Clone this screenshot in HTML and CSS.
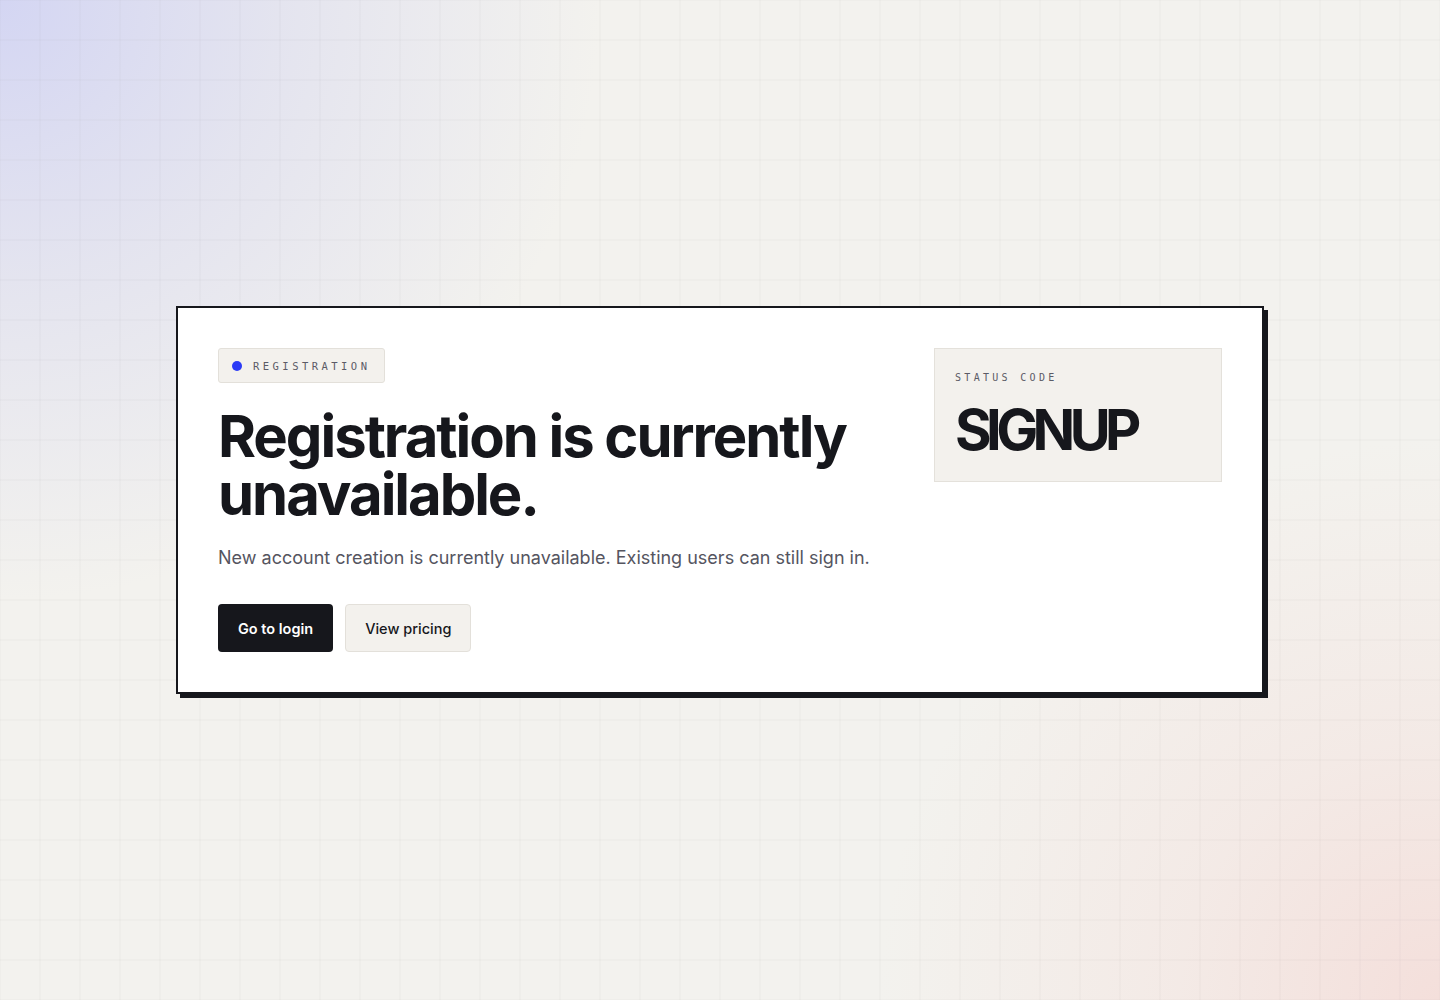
FILE: index.html
```html
<!DOCTYPE html>
<html lang="en">
<head>
<meta charset="utf-8">
<title>Registration unavailable</title>
<link rel="stylesheet" href="styles.css">
</head>
<body>
<div class="page">
  <main class="card">
    <section class="main-col">
      <div class="badge"><span class="dot"></span><span class="badge-text">REGISTRATION</span></div>
      <h1 class="title">Registration is currently unavailable.</h1>
      <p class="lead">New account creation is currently unavailable. Existing users can still sign in.</p>
      <div class="actions">
        <a class="btn btn-primary" href="#">Go to login</a>
        <a class="btn btn-secondary" href="#">View pricing</a>
      </div>
    </section>
    <aside class="status">
      <div class="status-label">STATUS CODE</div>
      <div class="status-code">SIGNUP</div>
    </aside>
  </main>
</div>
</body>
</html>
```
FILE: styles.css
```css
* { box-sizing: border-box; }
html, body { margin: 0; padding: 0; }
body {
  font-family: Inter, "Noto Sans", sans-serif;
  color: #16171c;
  background-color: #f3f2ee;
  background-image:
    linear-gradient(to right, rgba(0,0,0,0.016) 2px, transparent 2px),
    linear-gradient(to bottom, rgba(0,0,0,0.016) 2px, transparent 2px),
    radial-gradient(circle at 0 0, rgba(210,212,243,0.95) 0, rgba(218,219,240,0.6) 280px, rgba(243,242,238,0) 600px),
    radial-gradient(circle at 100% 100%, rgba(244,222,218,0.95) 0, rgba(244,226,222,0.5) 260px, rgba(243,242,238,0) 560px);
  background-size: 40px 40px, 40px 40px, 100% 100%, 100% 100%;
  background-position: -1px -1px, -1px -1px, 0 0, 0 0;
  min-height: 1000px;
}
.page {
  min-height: 1000px;
  display: flex;
  align-items: flex-start;
  justify-content: flex-start;
  padding: 306px 0 0 176px;
}
.card {
  width: 1088px;
  background: #ffffff;
  border: 2px solid #16171c;
  box-shadow: 4px 4px 0 #16171c;
  padding: 40px;
  display: grid;
  grid-template-columns: 1fr 288px;
  column-gap: 48px;
  align-items: start;
}
.main-col { min-width: 0; }
.badge {
  display: inline-flex;
  align-items: center;
  gap: 11px;
  height: 35px;
  padding: 0 14px 0 13px;
  background: #f3f1ed;
  border: 1px solid #e3e0da;
  border-radius: 3px;
}
.dot {
  width: 10px;
  height: 10px;
  border-radius: 50%;
  background: #2b3bf6;
}
.badge-text {
  font-family: "DejaVu Sans Mono", "Liberation Mono", monospace;
  font-size: 10.5px;
  letter-spacing: 0.33em;
  color: #5b5b66;
}
.title {
  margin: 24px 0 0;
  font-size: 58px;
  line-height: 58px;
  font-weight: 700;
  letter-spacing: -0.035em;
  color: #16171c;
}
.lead {
  margin: 21px 0 0;
  font-size: 18px;
  line-height: 28px;
  color: #55555f;
}
.actions {
  display: flex;
  gap: 12px;
  margin-top: 32px;
}
.btn {
  display: inline-flex;
  align-items: center;
  justify-content: center;
  height: 48px;
  padding: 0 20px;
  border-radius: 4px;
  font-size: 14.5px;
  font-weight: 600;
  text-decoration: none;
}
.btn-primary {
  background: #16171c;
  color: #ffffff;
}
.btn-secondary {
  background: #f3f1ed;
  color: #16171c;
  border: 1px solid #e3e0da;
  font-weight: 500;
  padding: 0 19px;
}
.status {
  background: #f3f1ed;
  border: 1px solid #e4e1db;
  height: 134px;
  padding: 23px 20px 0 20px;
}
.status-label {
  font-family: "DejaVu Sans Mono", "Liberation Mono", monospace;
  font-size: 10px;
  letter-spacing: 0.33em;
  color: #5b5b66;
}
.status-code {
  margin-top: 17px;
  font-size: 56px;
  line-height: 60px;
  font-weight: 700;
  letter-spacing: -0.1em;
  color: #16171c;
}
```
